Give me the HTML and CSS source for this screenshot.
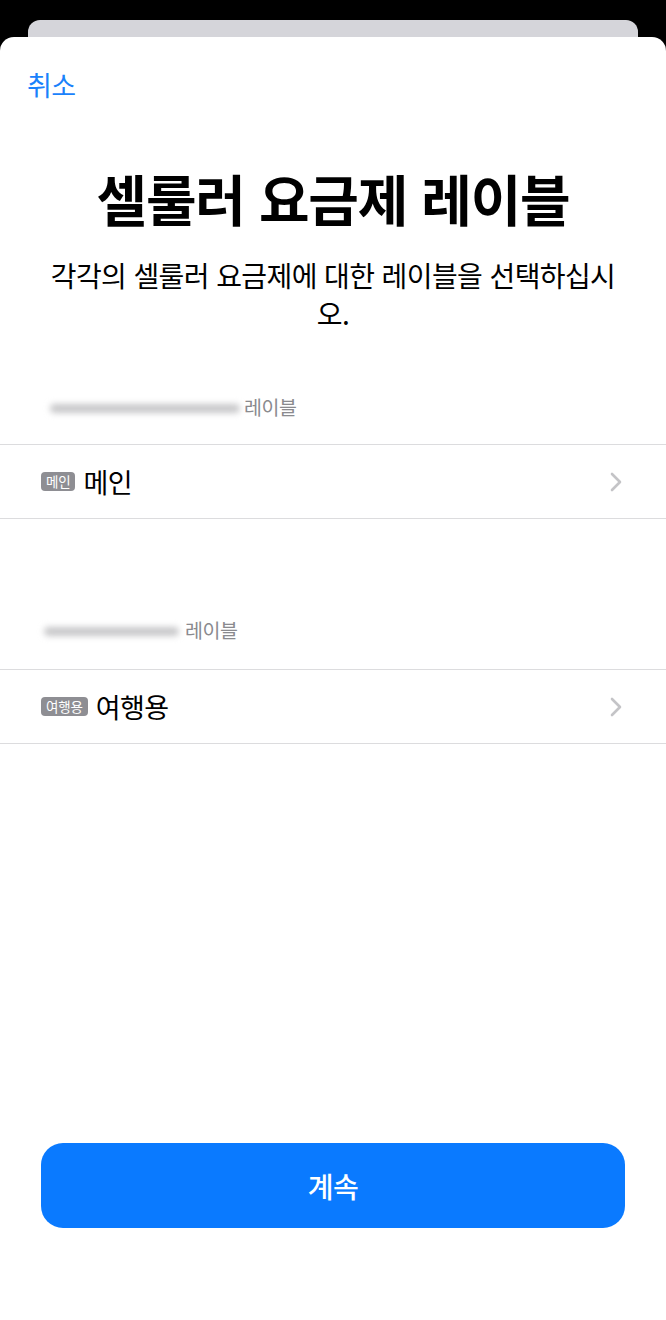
FILE: index.html
```html
<!DOCTYPE html>
<html lang="ko">
<head>
<meta charset="utf-8">
<link rel="stylesheet" href="styles.css">
</head>
<body>
<div class="screen">
  <div class="back-card"></div>
  <div class="sheet">
    <div class="nav"><span class="cancel">취소</span></div>
    <h1 class="title">셀룰러 요금제 레이블</h1>
    <p class="subtitle">각각의 셀룰러 요금제에 대한 레이블을 선택하십시<br>오.</p>

    <div class="section first">
      <div class="section-header"><span class="blur b1"></span><span class="hdr-text">레이블</span></div>
      <div class="row">
        <span class="badge">메인</span>
        <span class="row-label">메인</span>
        <svg class="chev" width="14" height="22" viewBox="0 0 14 22"><path d="M3 3 L11 11 L3 19" fill="none" stroke="#c4c4c7" stroke-width="2.6" stroke-linecap="round" stroke-linejoin="round"/></svg>
      </div>
    </div>

    <div class="section second">
      <div class="section-header"><span class="blur b2"></span><span class="hdr-text">레이블</span></div>
      <div class="row">
        <span class="badge">여행용</span>
        <span class="row-label">여행용</span>
        <svg class="chev" width="14" height="22" viewBox="0 0 14 22"><path d="M3 3 L11 11 L3 19" fill="none" stroke="#c4c4c7" stroke-width="2.6" stroke-linecap="round" stroke-linejoin="round"/></svg>
      </div>
    </div>

    <div class="spacer"></div>
    <div class="footer"><button class="continue">계속</button></div>
  </div>
</div>
</body>
</html>
```

FILE: styles.css
```css
* { box-sizing: border-box; }
html, body { margin: 0; padding: 0; background: #000; }
body { font-family: "Noto Sans CJK KR", "Noto Sans", sans-serif; }
.screen { width: 666px; height: 1320px; padding-top: 20px; display: flex; flex-direction: column; overflow: hidden; }
.back-card { height: 17px; margin: 0 28px; background: #d5d5da; border-radius: 12px 12px 0 0; flex: none; }
.sheet { flex: 1; background: #fff; border-radius: 14px 14px 0 0; display: flex; flex-direction: column; }
.nav { padding: 30px 0 0 27px; height: 70px; }
.cancel { color: #1a82fb; font-size: 27px; line-height: 36px; letter-spacing: -0.5px; }
.title { margin: 52px 0 0; text-align: center; font-size: 55px; font-weight: 700; line-height: 76px; letter-spacing: -1.2px; color: #000; }
.subtitle { margin: 21px 30px 0; text-align: center; font-size: 28px; line-height: 38px; letter-spacing: -0.6px; color: #000; font-weight: 400; }
.section.first { margin-top: 52px; }
.section.second { margin-top: 88px; }
.section-header { height: 60px; display: flex; align-items: flex-start; padding-top: 8px; }
.second .section-header { height: 62px; }
.blur { display: inline-block; height: 9px; background: #c7c7c9; filter: blur(3px); border-radius: 5px; margin-top: 12px; }
.b1 { width: 190px; margin-left: 50px; margin-right: 4px; }
.b2 { width: 135px; margin-left: 44px; margin-right: 6px; }
.hdr-text { font-size: 19.5px; line-height: 30px; color: #8a8a8e; letter-spacing: -0.5px; }
.row { height: 75px; border-top: 1.5px solid #dcdcde; border-bottom: 1.5px solid #dcdcde; display: flex; align-items: center; padding: 0 43px 0 41px; }
.badge { background: #8e8e93; color: #fff; font-size: 13.5px; line-height: 19px; padding: 0 5px; border-radius: 4px; letter-spacing: -0.2px; }
.row-label { margin-left: 8px; font-size: 27px; color: #000; letter-spacing: -0.5px; line-height: 36px; }
.chev { margin-left: auto; }
.spacer { flex: 1; }
.footer { padding: 0 41px 92px; }
.continue { width: 100%; height: 85px; border: none; border-radius: 22px; background: #0a7aff; color: #fff; font-family: "Noto Sans CJK KR", "Noto Sans", sans-serif; font-size: 28px; font-weight: 500; letter-spacing: -0.5px; }
```
